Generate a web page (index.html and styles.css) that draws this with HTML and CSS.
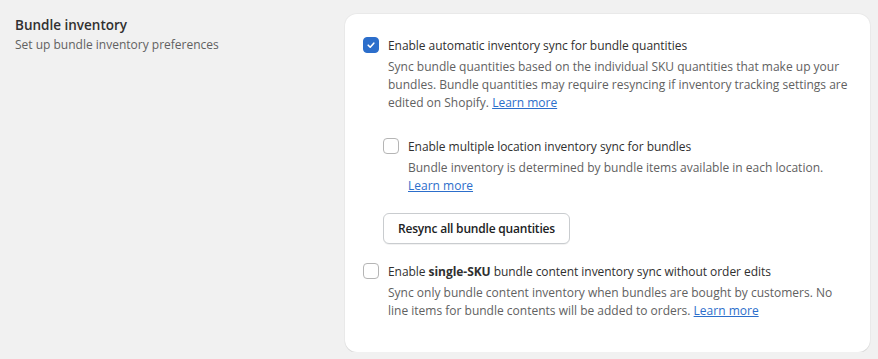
FILE: index.html
```html
<!DOCTYPE html>
<html lang="en">
<head>
  <meta charset="UTF-8">
  <title>Bundle inventory settings</title>
  <link rel="stylesheet" href="styles.css">
</head>
<body>
  <div class="settings-row">
    <!-- section heading -->
    <div class="section-info">
      <h2 class="section-title">Bundle inventory</h2>
      <p class="section-sub">Set up bundle inventory preferences</p>
    </div>

    <div class="card">
      <div class="option">
        <label class="check-row">
          <span class="box checked">
            <svg viewBox="0 0 16 16" width="16" height="16"><path d="M5.2 8.2l2 2 3.6-4" fill="none" stroke="#fff" stroke-width="1.6" stroke-linecap="round" stroke-linejoin="round"/></svg>
          </span>
          <span class="check-label">Enable automatic inventory sync for bundle quantities</span>
        </label>
        <p class="help">Sync bundle quantities based on the individual SKU quantities that make up your bundles. Bundle quantities may require resyncing if inventory tracking settings are edited on Shopify. <a href="#">Learn more</a></p>

        <div class="nested">
          <label class="check-row">
            <span class="box"></span>
            <span class="check-label">Enable multiple location inventory sync for bundles</span>
          </label>
          <p class="help narrow">Bundle inventory is determined by bundle items available in each location. <a href="#">Learn more</a></p>

          <button class="btn">Resync all bundle quantities</button>
        </div>
      </div>

      <div class="option">
        <label class="check-row">
          <span class="box"></span>
          <span class="check-label">Enable <b>single-SKU</b> bundle content inventory sync without order edits</span>
        </label>
        <p class="help">Sync only bundle content inventory when bundles are bought by customers. No line items for bundle contents will be added to orders. <a href="#">Learn more</a></p>
      </div>
    </div>
  </div>
</body>
</html>
```

FILE: styles.css
```css
body {
  margin: 0;
  background: #f1f1f1;
  font-family: "Open Sans", "Noto Sans", sans-serif;
  font-size: 12px;
  color: #303030;
}
.settings-row {
  display: flex;
  padding: 14px 8px 0 15px;
}
.section-info {
  width: 330px;
  flex-shrink: 0;
  padding-top: 1px;
}
.section-title {
  margin: 0;
  font-size: 13.5px;
  font-weight: 600;
  line-height: 20px;
  color: #303030;
}
.section-sub {
  margin: 1px 0 0;
  line-height: 18px;
  color: #616161;
}
.card {
  flex: 1;
  background: #fff;
  border-radius: 12px;
  box-shadow: 0 1px 0 rgba(0, 0, 0, 0.07), 0 0 0 1px rgba(0, 0, 0, 0.03);
  padding: 22px 18px 32px 18px;
  height: 338px;
  box-sizing: border-box;
}
.check-row {
  display: flex;
  align-items: flex-start;
  gap: 9px;
  line-height: 20px;
  letter-spacing: -0.05px;
  cursor: pointer;
}
.box {
  width: 16px;
  height: 16px;
  margin-top: 1px;
  flex-shrink: 0;
  box-sizing: border-box;
  border: 1px solid #b5b5b5;
  border-radius: 4px;
  background: #fff;
  display: flex;
}
.box.checked {
  background: #2c6ecb;
  border-color: #2c6ecb;
}
.box.checked svg {
  margin: -1px;
}
.check-label b {
  font-weight: 700;
}
.help {
  margin: 2px 0 0 25px;
  line-height: 18px;
  color: #616161;
  max-width: 462px;
}
.help.narrow {
  max-width: 430px;
}
.help a {
  color: #2c6ecb;
  text-decoration: underline;
}
.nested {
  margin: 25px 0 0 20px;
}
.btn {
  margin-top: 18px;
  height: 31px;
  padding: 0 14px;
  background: #fff;
  border: 1px solid #c9cccf;
  border-radius: 6px;
  font-family: inherit;
  font-size: 12px;
  font-weight: 600;
  letter-spacing: -0.2px;
  color: #202223;
  box-shadow: 0 1px 0 rgba(0, 0, 0, 0.05);
}
.option + .option {
  margin-top: 18px;
}
```
